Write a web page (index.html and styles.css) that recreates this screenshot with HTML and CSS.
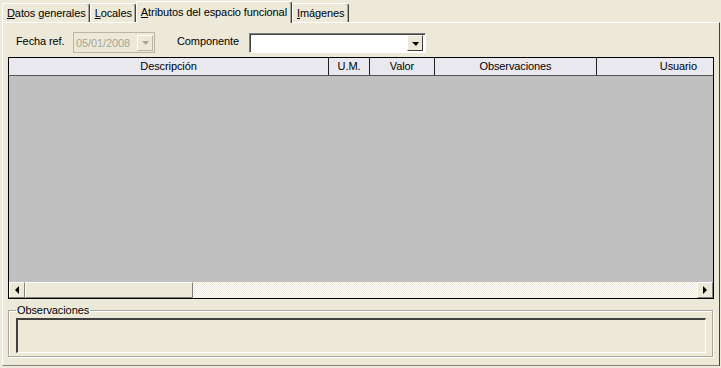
FILE: index.html
```html
<!DOCTYPE html>
<html lang="es">
<head>
  <meta charset="UTF-8">
  <title>Atributos del espacio funcional</title>
  <link rel="stylesheet" href="styles.css">
</head>
<body>
  <!-- Pestañas -->
  <div class="tabs">
    <div class="tab"><u>D</u>atos generales</div>
    <div class="tab"><u>L</u>ocales</div>
    <div class="tab active"><u>A</u>tributos del espacio funcional</div>
    <div class="tab"><u>I</u>mágenes</div>
  </div>

  <div class="panel">
    <!-- Filtros -->
    <div class="filters">
      <span class="label label-fecha">Fecha ref.</span>
      <div class="combo combo-date">
        <span class="combo-text">05/01/2008</span>
        <span class="combo-btn"><span class="arrow-down"></span></span>
      </div>
      <span class="label label-comp">Componente</span>
      <div class="combo combo-comp">
        <span class="combo-text"></span>
        <span class="combo-btn"><span class="arrow-down"></span></span>
      </div>
    </div>

    <!-- Rejilla -->
    <div class="grid">
      <div class="grid-head">
        <div class="col col-desc">Descripción</div>
        <div class="col col-um">U.M.</div>
        <div class="col col-valor">Valor</div>
        <div class="col col-obs">Observaciones</div>
        <div class="col col-user">Usuario</div>
      </div>
      <div class="grid-body"></div>
      <div class="hscroll">
        <span class="sb-btn"><span class="arrow-left"></span></span>
        <span class="sb-thumb"></span>
        <span class="sb-track"></span>
        <span class="sb-btn"><span class="arrow-right"></span></span>
      </div>
    </div>

    <!-- Observaciones -->
    <fieldset class="group">
      <legend>Observaciones</legend>
      <div class="memo"></div>
    </fieldset>
  </div>
</body>
</html>
```

FILE: styles.css
```css
body {
  margin: 0;
  background-color: #ece9d8;
  color: #000;
  font-family: "Liberation Sans", Arial, sans-serif;
  font-size: 11px;
  letter-spacing: -0.1px;
  width: 721px;
  height: 368px;
  overflow: hidden;
}

u {
  text-decoration: underline;
}

.tabs {
  display: flex;
  align-items: flex-end;
  height: 22px;
  padding-left: 2px;
  position: relative;
  z-index: 1;
}

.tab {
  height: 18px;
  line-height: 18px;
  padding: 0 3px 0 4px;
  border: 1px solid #fff;
  border-bottom: none;
  border-right: 1px solid #404040;
  box-shadow: inset -1px 0 0 #aca899;
  border-radius: 2px 3px 0 0;
  white-space: nowrap;
}

.tab.active {
  height: 21px;
  line-height: 21px;
  margin-bottom: -1px;
  padding: 0 4px 0 4px;
  background-color: #ece9d8;
}

.panel {
  width: 716px;
  height: 342px;
  margin-left: 2px;
  border: 1px solid #fff;
  border-right: 1px solid #404040;
  border-bottom: 1px solid #808080;
  box-sizing: content-box;
  display: flex;
  flex-direction: column;
  padding: 0;
}

.filters {
  display: flex;
  align-items: center;
  height: 21px;
  margin-top: 9px;
}

.label {
  line-height: 14px;
  margin-top: -3px;
}

.label-fecha {
  margin-left: 13px;
  width: 57px;
}

.label-comp {
  margin-left: 22px;
  width: 72px;
}

.combo {
  display: flex;
  align-items: center;
  height: 19px;
  box-sizing: border-box;
}

.combo-date {
  width: 82px;
  height: 21px;
  border: 1px solid #b9b6a7;
  padding: 1px;
  background-color: #ece9d8;
  color: #a7a495;
}

.combo-comp {
  width: 177px;
  height: 20px;
  border-top: 1px solid #808080;
  border-left: 1px solid #808080;
  border-right: 1px solid #fff;
  border-bottom: 1px solid #fff;
  box-shadow: inset 1px 1px 0 #404040;
  padding: 2px 2px 1px 2px;
  background-color: #fff;
}

.combo-text {
  flex: 1;
  padding-left: 1px;
}

.combo-btn {
  width: 16px;
  height: 16px;
  box-sizing: border-box;
  border-top: 1px solid #fff;
  border-left: 1px solid #fff;
  border-right: 1px solid #404040;
  border-bottom: 1px solid #404040;
  background-color: #ece9d8;
  display: flex;
  align-items: center;
  justify-content: center;
}

.combo-date .combo-btn {
  border-color: #fff #b9b6a7 #b9b6a7 #fff;
}

.arrow-down {
  width: 0;
  height: 0;
  border-left: 4px solid transparent;
  border-right: 3px solid transparent;
  border-top: 4px solid #000;
  margin-top: 1px;
}

.combo-date .arrow-down {
  border-top-color: #a7a495;
}

.grid {
  margin: 4px 0 0 5px;
  width: 706px;
  height: 242px;
  box-sizing: border-box;
  border: 1px solid #000;
  display: flex;
  flex-direction: column;
}

.grid-head {
  display: flex;
  height: 17px;
  background-color: #e9e8ee;
  border-bottom: 1px solid #555;
}

.col {
  border-right: 1px solid #222;
  text-align: center;
  line-height: 17px;
  box-sizing: border-box;
  white-space: nowrap;
}

.col-desc { width: 320px; }
.col-um { width: 41px; }
.col-valor { width: 65px; }
.col-obs { width: 162px; }

.col-user {
  flex: 1;
  border-right: none;
  text-align: right;
  padding-right: 16px;
}

.grid-body {
  flex: 1;
  background-color: #c0c0c0;
}

.hscroll {
  display: flex;
  height: 16px;
}

.sb-btn,
.sb-thumb {
  height: 16px;
  box-sizing: border-box;
  border-top: 1px solid #fff;
  border-left: 1px solid #fff;
  border-right: 1px solid #808080;
  border-bottom: 1px solid #808080;
  background-color: #ece9d8;
  display: flex;
  align-items: center;
  justify-content: center;
}

.sb-btn {
  width: 16px;
}

.sb-thumb {
  width: 168px;
}

.sb-track {
  flex: 1;
  background-color: #f5f3ea;
  background-image: repeating-conic-gradient(#ece9d8 0 25%, #fff 0 50%);
  background-size: 2px 2px;
}

.arrow-left {
  width: 0;
  height: 0;
  border-top: 4px solid transparent;
  border-bottom: 4px solid transparent;
  border-right: 4px solid #000;
}

.arrow-right {
  width: 0;
  height: 0;
  border-top: 4px solid transparent;
  border-bottom: 4px solid transparent;
  border-left: 4px solid #000;
}

.group {
  margin: 5px 0 0 5px;
  width: 705px;
  height: 53px;
  box-sizing: border-box;
  padding: 2px 6px 0 7px;
  border: 1px solid #aca899;
  box-shadow: 1px 1px 0 #fff, inset 1px 1px 0 #fff;
}

.group legend {
  padding: 0 1px;
  margin-left: 0;
  line-height: 12px;
}

.memo {
  height: 35px;
  box-sizing: border-box;
  border-top: 2px solid #404040;
  border-left: 2px solid #404040;
  border-right: 1px solid #fff;
  border-bottom: 1px solid #fff;
  background-color: #ece9d8;
}
```
